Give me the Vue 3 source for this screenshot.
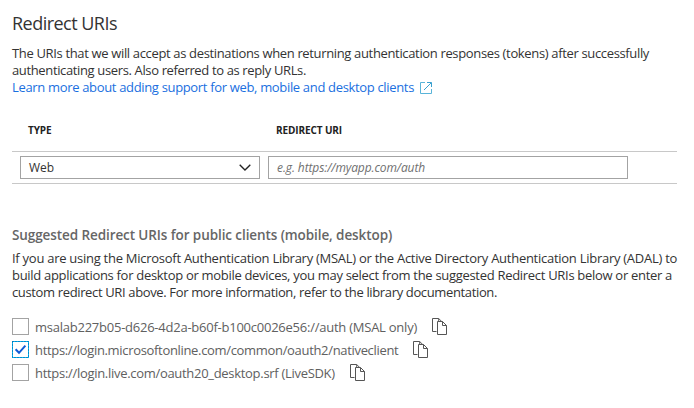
<script setup>
import { ref } from 'vue'

const uris = ref([
  { text: 'msalab227b05-d626-4d2a-b60f-b100c0026e56://auth (MSAL only)', checked: false, kind: 'msal' },
  { text: 'https://login.microsoftonline.com/common/oauth2/nativeclient', checked: true, kind: 'native' },
  { text: 'https://login.live.com/oauth20_desktop.srf (LiveSDK)', checked: false, kind: 'live' },
])
</script>

<template>
  <main class="panel">
    <h1>Redirect URIs</h1>
    <p class="copy intro">
      <span class="i1">The URIs that we will accept as destinations when returning authentication responses (tokens) after successfully</span>
      <span class="i2">authenticating users. Also referred to as reply URLs.</span>
    </p>
    <div class="learn">
      <a>Learn more about adding support for web, mobile and desktop clients</a>
      <svg width="12" height="12" viewBox="0 0 12 12" fill="none" stroke="#3aa0cf">
        <path d="M5 .5H.5v11h11V7" stroke="#59b4d9" />
        <path d="M7 .5h4.5V5M11.2.8 4 8" />
      </svg>
    </div>

    <section class="table">
      <div class="head">
        <span class="type">TYPE</span>
        <span class="uri">REDIRECT URI</span>
      </div>
      <div class="row">
        <div class="select">
          <span>Web</span>
          <svg width="12" height="7" viewBox="0 0 12 7" fill="none" stroke="#222" stroke-width="1.35">
            <path d="M.7.7 6 6 11.3.7" />
          </svg>
        </div>
        <div class="input">e.g. https://myapp.com/auth</div>
      </div>
    </section>

    <h2>Suggested Redirect URIs for public clients (mobile, desktop)</h2>
    <p class="copy">
      <span class="p1">If you are using the Microsoft Authentication Library (MSAL) or the Active Directory Authentication Library (ADAL) to</span>
      <span class="p2">build applications for desktop or mobile devices, you may select from the suggested Redirect URIs below or enter a</span>
      <span class="p3">custom redirect URI above. For more information, refer to the library documentation.</span>
    </p>

    <ul>
      <li v-for="u in uris" :key="u.kind" :class="u.kind">
        <span class="box" :class="{ checked: u.checked }" role="checkbox" :aria-checked="u.checked" @click="u.checked = !u.checked">
          <svg v-if="u.checked" width="17" height="17" viewBox="0 0 17 17" fill="none">
            <rect x=".5" y=".5" width="16" height="16" stroke="#00b7f5" />
            <rect x=".5" y=".5" width="16" height="16" stroke="#085c9c" stroke-dasharray="1 2" />
            <path d="M3.6 8.3 7 11.8 13.4 4.7" stroke="#0f5bd7" stroke-width="2" />
          </svg>
        </span>
        <span class="label">{{ u.text }}</span>
        <svg class="icon" width="15" height="17" viewBox="0 0 15 17" fill="none" stroke="#555">
          <path d="M4.5 13.5h-4V.5h6.2l3 3" />
          <path d="M6.7.5v3" />
          <path d="M5.5 3.5h5l4 4v9h-9z" fill="#fff" />
          <path d="M10.5 3.5v4h4" />
        </svg>
      </li>
    </ul>
  </main>
</template>

<style>
body {
  background: #fff;
}
</style>

<style scoped>
.panel {
  box-sizing: border-box;
  width: 694px;
  height: 408px;
  padding: 11px 17px 0 12px;
  font: 13px/17px "Open Sans", "Noto Sans", sans-serif;
  color: #333;
  white-space: nowrap;
  overflow: hidden;
}
h1 {
  margin: 0 0 10px;
  font-size: 18px;
  line-height: 24px;
  font-weight: 400;
  letter-spacing: -0.52px;
}
.copy {
  margin: 0;
}
.copy span {
  display: block;
}
.i1 { letter-spacing: -0.346px; }
.i2 { letter-spacing: -0.363px; }
.p1 { letter-spacing: -0.267px; }
.p2 { letter-spacing: -0.3px; }
.p3 { letter-spacing: -0.359px; }
.learn {
  display: flex;
  align-items: center;
  gap: 6px;
  height: 17px;
  color: #1a6fe0;
  letter-spacing: -0.333px;
}
.table {
  margin-top: 24px;
}
.head {
  display: flex;
  height: 31px;
  padding-left: 16px;
  font-size: 10px;
  line-height: 21px;
  font-weight: 700;
  color: #222;
  letter-spacing: -0.11px;
}
.type {
  width: 248px;
}
.row {
  display: flex;
  gap: 8px;
  padding: 4px 8px;
  border-top: 1px solid #c8c8c8;
  border-bottom: 1px solid #c8c8c8;
}
.select,
.input {
  box-sizing: border-box;
  display: flex;
  align-items: center;
  height: 23px;
  border: 1px solid #a3a3a3;
  padding: 0 8px;
  font-size: 12px;
}
.select {
  justify-content: space-between;
  width: 240px;
}
.input {
  width: 360px;
  font-style: italic;
  color: #707070;
  letter-spacing: -0.1px;
}
h2 {
  margin: 43px 0 6px;
  font-size: 13.5px;
  line-height: 17px;
  font-weight: 600;
  color: #666;
  letter-spacing: -0.09px;
}
ul {
  list-style: none;
  margin: 14px 0 0;
  padding: 0;
  color: #606060;
}
li {
  display: flex;
  align-items: center;
  height: 23px;
}
.box {
  box-sizing: border-box;
  width: 17px;
  height: 17px;
  margin-right: 6px;
  border: 1px solid #a3a3a3;
}
.box.checked {
  border: 0;
}
.box svg {
  display: block;
}
.label {
  padding-top: 2px;
}
.icon {
  margin-left: 15px;
}
.msal { letter-spacing: -0.241px; }
.native { letter-spacing: -0.325px; }
.live { letter-spacing: -0.3px; }
</style>
